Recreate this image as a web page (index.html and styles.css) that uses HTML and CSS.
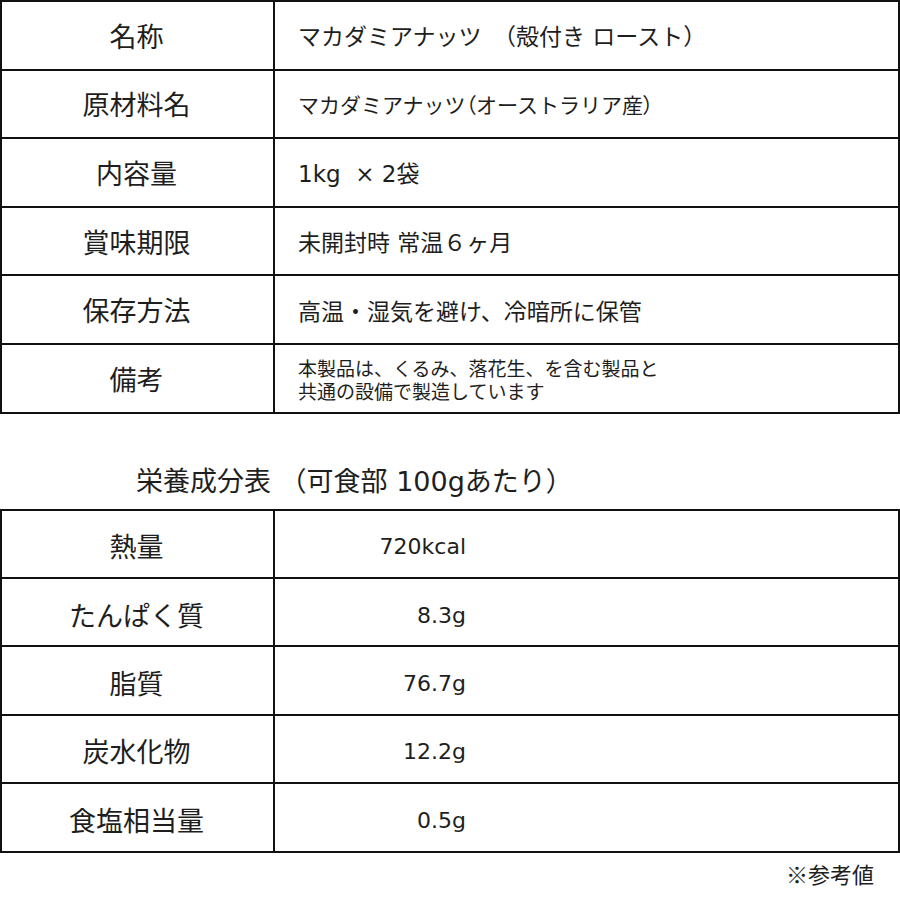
FILE: index.html
```html
<!DOCTYPE html>
<html lang="ja">
<head>
<meta charset="utf-8">
<title>マカダミアナッツ</title>
<link rel="stylesheet" href="styles.css">
</head>
<body>
<div class="page">
  <div class="table info">
    <div class="cell label">名称</div>
    <div class="cell value">マカダミアナッツ　（殻付き ロースト）</div>
    <div class="cell label">原材料名</div>
    <div class="cell value small">マカダミアナッツ<span class="palt">（</span>オーストラリア産<span class="palt">）</span></div>
    <div class="cell label">内容量</div>
    <div class="cell value">1kg&nbsp;&nbsp;× 2袋</div>
    <div class="cell label">賞味期限</div>
    <div class="cell value">未開封時 常温６ヶ月</div>
    <div class="cell label">保存方法</div>
    <div class="cell value">高温・湿気を避け、冷暗所に保管</div>
    <div class="cell label">備考</div>
    <div class="cell value note">
      <div class="note-line">本製品は、くるみ、落花生、を含む製品と</div>
      <div class="note-line">共通の設備で製造しています</div>
    </div>
  </div>

  <div class="heading">栄養成分表 （可食部 100gあたり）</div>

  <div class="table nutrition">
    <div class="cell label">熱量</div>
    <div class="cell value num"><span class="num-box">720kcal</span></div>
    <div class="cell label">たんぱく質</div>
    <div class="cell value num"><span class="num-box">8.3g</span></div>
    <div class="cell label">脂質</div>
    <div class="cell value num"><span class="num-box">76.7g</span></div>
    <div class="cell label">炭水化物</div>
    <div class="cell value num"><span class="num-box">12.2g</span></div>
    <div class="cell label">食塩相当量</div>
    <div class="cell value num"><span class="num-box">0.5g</span></div>
  </div>

  <div class="footnote">※参考値</div>
</div>
</body>
</html>
```

FILE: styles.css
```css
html, body {
  margin: 0;
  padding: 0;
  background: #ffffff;
}

body {
  font-family: "DejaVu Sans", "Noto Sans CJK JP", sans-serif;
  color: #1e1e1e;
}

.page {
  width: 900px;
}

.table {
  display: grid;
  grid-template-columns: 273px 1fr;
  border-top: 2px solid #111;
  border-left: 2px solid #111;
  box-sizing: border-box;
  width: 900px;
}

.info {
  grid-auto-rows: 68.6px;
}

.nutrition {
  grid-auto-rows: 68.4px;
}

.cell {
  box-sizing: border-box;
  border-right: 2px solid #111;
  border-bottom: 2px solid #111;
  display: flex;
  align-items: center;
}

.label {
  justify-content: center;
  font-family: "Noto Sans CJK JP", sans-serif;
  font-size: 27px;
  padding-right: 2px;
}

.nutrition .label {
  padding-top: 4px;
}

.value {
  padding-left: 23px;
  font-size: 23px;
  white-space: nowrap;
}

.value.small {
  font-size: 21px;
}

.palt {
  font-family: "Noto Sans CJK JP", sans-serif;
  font-feature-settings: "palt";
}

.value.note {
  flex-direction: column;
  align-items: flex-start;
  justify-content: center;
  font-family: "Noto Sans CJK JP", sans-serif;
  font-size: 19px;
  padding-top: 2px;
}

.note-line {
  line-height: 23px;
  height: 23px;
}

.value.num {
  padding-left: 0;
  padding-top: 6px;
  font-size: 22px;
}

.num-box {
  display: block;
  width: 191px;
  text-align: right;
}

.heading {
  height: 95px;
  box-sizing: border-box;
  padding-left: 136px;
  display: flex;
  align-items: center;
  padding-top: 36px;
  font-size: 27px;
}

.footnote {
  text-align: right;
  padding-right: 26px;
  font-family: "Noto Sans CJK JP", sans-serif;
  font-size: 22px;
  line-height: 30px;
  padding-top: 5px;
}
```
